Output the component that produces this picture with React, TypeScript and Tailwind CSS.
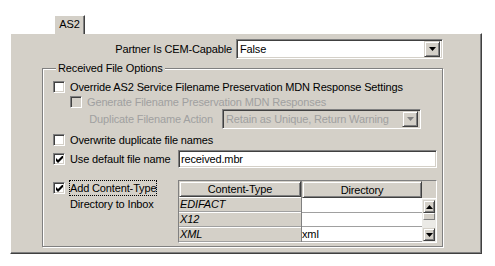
import React from "react";

const sunken =
  "border border-t-[#808080] border-l-[#808080] border-b-white border-r-white shadow-[inset_1px_1px_0_#404040,inset_-1px_-1px_0_#d4d0c8]";
const raised =
  "border border-t-[#d4d0c8] border-l-[#d4d0c8] border-b-[#404040] border-r-[#404040] shadow-[inset_1px_1px_0_#fff,inset_-1px_-1px_0_#808080]";

function Check({ checked = false, disabled = false }: { checked?: boolean; disabled?: boolean }) {
  return (
    <span
      className={`w-[12px] h-[12px] shrink-0 flex items-center justify-center ${sunken} ${
        disabled ? "bg-[#d4d0c8]" : "bg-white"
      }`}
    >
      {checked && (
        <svg width="7" height="7" viewBox="0 0 7 7">
          <path d="M0 2 L2 4 L7 -1 L7 2 L2 7 L0 5 Z" fill="#000" />
        </svg>
      )}
    </span>
  );
}

function DropButton({ disabled = false }: { disabled?: boolean }) {
  return (
    <span className={`w-[16px] h-[16px] shrink-0 bg-[#d4d0c8] flex items-center justify-center ${raised}`}>
      <svg width="7" height="4" viewBox="0 0 7 4">
        <path d="M0 0 H7 L3.5 4 Z" fill={disabled ? "#808080" : "#000"} />
      </svg>
    </span>
  );
}

function ScrollButton({ up }: { up: boolean }) {
  return (
    <span className={`w-full h-[13px] shrink-0 bg-[#d4d0c8] flex items-center justify-center ${raised}`}>
      <svg width="7" height="4" viewBox="0 0 7 4">
        <path d={up ? "M0 4 H7 L3.5 0 Z" : "M0 0 H7 L3.5 4 Z"} fill="#000" />
      </svg>
    </span>
  );
}

const rows = [
  { type: "EDIFACT", dir: "" },
  { type: "X12", dir: "" },
  { type: "XML", dir: "xml" },
];

export default function App() {
  return (
    <div className="w-[495px] h-[266px] bg-white pt-[15px] pl-[10px] font-['Liberation_Sans',Arial,sans-serif] text-[11px] tracking-[-0.14px] text-black leading-[14px] select-none">
      {/* Tab strip */}
      <div className="flex pl-[44px]">
        <div className="relative z-10 -mb-[1px] w-[31px] h-[19px] bg-[#d4d0c8] border-t border-l border-white border-r border-r-[#404040] shadow-[inset_-1px_0_0_#808080] flex items-center justify-center pb-[2px]">
          AS2
        </div>
      </div>

      {/* Panel */}
      <div className="w-[472px] h-[221px] bg-[#d4d0c8] border border-t-white border-l-white border-r-[#404040] border-b-[#404040] shadow-[inset_-1px_-1px_0_#808080] pl-[31px] pr-[38px]">
        {/* Partner row */}
        <div className="flex items-center justify-end gap-[4px] mt-[5px]">
          <span>Partner Is CEM-Capable</span>
          <div className={`w-[207px] h-[20px] bg-white flex items-center pl-[3px] pr-[2px] ${sunken}`}>
            <span className="flex-1">False</span>
            <DropButton />
          </div>
        </div>

        {/* Received File Options */}
        <fieldset className="mt-[2px] h-[186px] border border-[#808080] shadow-[1px_1px_0_#fff,inset_1px_1px_0_#fff] pl-[10px]">
          <legend className="ml-[3px] px-[2px] bg-[#d4d0c8] leading-[14px]">Received File Options</legend>

          <div className="flex items-center gap-[5px] h-[14px] mt-[5px]">
            <Check />
            <span>Override AS2 Service Filename Preservation MDN Response Settings</span>
          </div>

          <div className="flex items-center gap-[5px] h-[14px] mt-[1px] pl-[17px] text-[#a0a0a0]">
            <Check disabled />
            <span>Generate Filename Preservation MDN Responses</span>
          </div>

          <div className="flex items-center h-[20px] text-[#a0a0a0]">
            <span className="w-[160px] text-right">Duplicate Filename Action</span>
            <div className={`ml-[9px] w-[199px] h-[20px] bg-[#d4d0c8] flex items-center pl-[3px] pr-[2px] ${sunken}`}>
              <span className="flex-1">Retain as Unique, Return Warning</span>
              <DropButton disabled />
            </div>
          </div>

          <div className="flex items-center gap-[5px] h-[14px] mt-[4px]">
            <Check />
            <span>Overwrite duplicate file names</span>
          </div>

          <div className="flex items-center h-[18px] mt-[3px]">
            <div className="w-[125px] flex items-center gap-[5px]">
              <Check checked />
              <span>Use default file name</span>
            </div>
            <div className={`w-[259px] h-[18px] bg-white flex items-center pl-[2px] ${sunken}`}>received.mbr</div>
          </div>

          <div className="flex items-start mt-[12px]">
            <div className="w-[125px] flex items-start gap-[5px]">
              <span className="mt-[2px]">
                <Check checked />
              </span>
              <div className="flex flex-col leading-[16px]">
                <span className="self-start border border-dotted border-black leading-[14px] -ml-[1px]">Add Content-Type</span>
                <span>Directory to Inbox</span>
              </div>
            </div>

            {/* Content-Type table */}
            <div className="w-[259px] h-[63px] flex border border-t-[#808080] border-l-[#808080] border-b-white border-r-white">
              <div className="w-[122px] flex flex-col">
                <div className={`h-[18px] bg-[#d4d0c8] flex items-center justify-center ${raised}`}>Content-Type</div>
                {rows.map((r) => (
                  <div
                    key={r.type}
                    className="h-[15px] bg-[#d4d0c8] border-b border-[#a0a0a0] shadow-[inset_0_1px_0_#fff] flex items-center pl-[1px] italic"
                  >
                    {r.type}
                  </div>
                ))}
              </div>
              <div className="w-[121px] flex flex-col border-l border-[#808080]">
                <div className={`h-[18px] bg-[#d4d0c8] flex items-center justify-center ${raised}`}>Directory</div>
                {rows.map((r) => (
                  <div key={r.type} className="h-[15px] bg-white border-b border-[#a0a0a0] flex items-center">
                    {r.dir}
                  </div>
                ))}
              </div>
              <div className="flex-1 flex flex-col bg-[#d4d0c8]">
                <div className="h-[18px] border-b border-white" />
                <div className="flex-1 flex flex-col px-[1px] pb-[1px] bg-[#ebeae6]">
                  <div className="h-[1px]" />
                  <ScrollButton up />
                  <div className="h-[7px] shrink-0 bg-[#d4d0c8] border border-[#808080] border-t-white border-l-white" />
                  <div className="flex-1" />
                  <ScrollButton up={false} />
                </div>
              </div>
            </div>
          </div>
        </fieldset>
      </div>
    </div>
  );
}
